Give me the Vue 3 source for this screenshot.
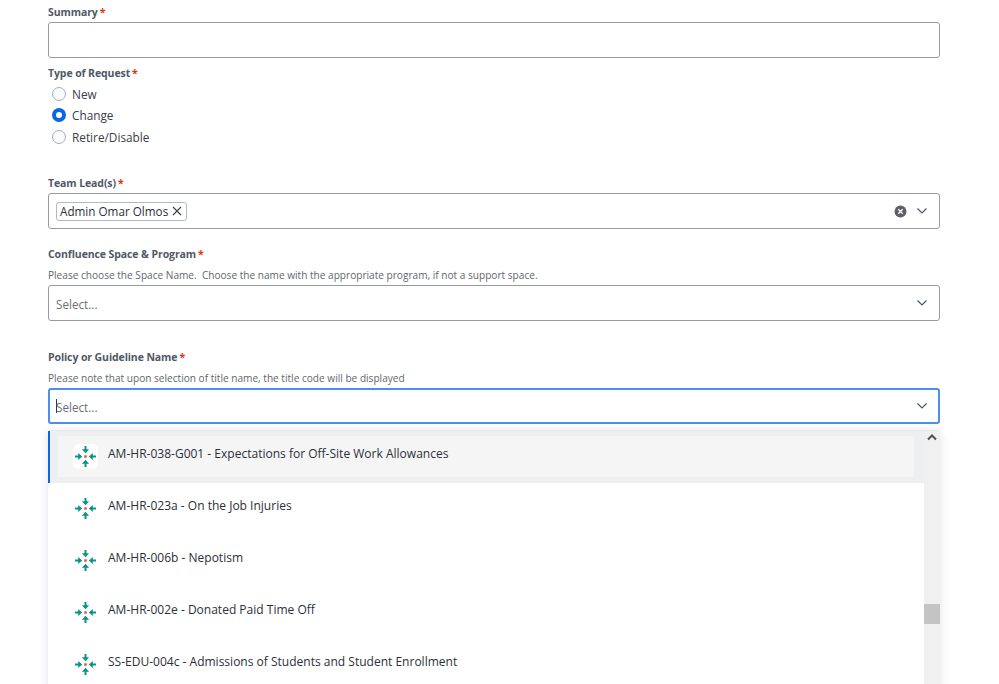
<script setup>
const options = [
  'AM-HR-038-G001 - Expectations for Off-Site Work Allowances',
  'AM-HR-023a - On the Job Injuries',
  'AM-HR-006b - Nepotism',
  'AM-HR-002e - Donated Paid Time Off',
  'SS-EDU-004c - Admissions of Students and Student Enrollment'
]
const radios = [
  { label: 'New', checked: false },
  { label: 'Change', checked: true },
  { label: 'Retire/Disable', checked: false }
]
</script>

<template>
  <div class="page">
    <div class="field summary">
      <label class="label">Summary<span class="req">*</span></label>
      <div class="control"></div>
    </div>

    <div class="field type">
      <label class="label">Type of Request<span class="req">*</span></label>
      <div class="radios">
        <div v-for="r in radios" :key="r.label" class="radio-row">
          <span class="radio" :class="{ checked: r.checked }"></span>
          <span>{{ r.label }}</span>
        </div>
      </div>
    </div>

    <div class="field lead">
      <label class="label">Team Lead(s)<span class="req">*</span></label>
      <div class="control select">
        <span class="tag">Admin Omar Olmos
          <svg width="10" height="10" viewBox="0 0 10 10"><path d="M1 1l8 8M9 1l-8 8" stroke="#3a4048" stroke-width="1.1" fill="none"/></svg>
        </span>
        <svg class="clear" width="13" height="13" viewBox="0 0 12 12"><circle cx="6" cy="6" r="5.5" fill="#5e6066"/><path d="M4 4l4 4M8 4l-4 4" stroke="#fff" stroke-width="1.2"/></svg>
        <svg class="chev" width="10" height="6" viewBox="0 0 10 6"><path d="M.5.5L5 5 9.5.5" stroke="#42526e" stroke-width="1.1" fill="none"/></svg>
      </div>
    </div>

    <div class="field space">
      <label class="label">Confluence Space &amp; Program<span class="req">*</span></label>
      <p class="help">Please choose the Space Name.&nbsp; Choose the name with the appropriate program, if not a support space.</p>
      <div class="control select tall">
        <span class="placeholder">Select...</span>
        <svg class="chev push" width="10" height="6" viewBox="0 0 10 6"><path d="M.5.5L5 5 9.5.5" stroke="#42526e" stroke-width="1.1" fill="none"/></svg>
      </div>
    </div>

    <div class="field policy">
      <label class="label">Policy or Guideline Name<span class="req">*</span></label>
      <p class="help">Please note that upon selection of title name, the title code will be displayed</p>
      <div class="control select tall focused">
        <span class="caret"></span>
        <span class="placeholder">Select...</span>
        <svg class="chev push" width="10" height="6" viewBox="0 0 10 6"><path d="M.5.5L5 5 9.5.5" stroke="#42526e" stroke-width="1.1" fill="none"/></svg>
      </div>

      <div class="menu">
        <div class="list">
          <div v-for="(o, i) in options" :key="o" class="option" :class="{ active: i === 0 }">
            <div class="option-inner">
              <span class="icon">
                <svg width="21" height="21" viewBox="0 0 21 21">
                  <g fill="#0b9486">
                    <path d="M9.5 0h2v3.2h2.6l-3.6 4-3.6-4h2.6z"/>
                    <path d="M9.5 21h2v-3.2h2.6l-3.6-4-3.6 4h2.6z"/>
                    <path d="M0 9.5v2h3.2v2.6l4-3.6-4-3.6v2.6z"/>
                    <path d="M21 9.5v2h-3.2v2.6l-4-3.6 4-3.6v2.6z"/>
                  </g>
                  <rect x="9.3" y="9.3" width="2.4" height="2.4" fill="#e5493a"/>
                </svg>
              </span>
              <span class="option-text">{{ o }}</span>
            </div>
          </div>
        </div>
        <div class="scrollbar">
          <svg class="arrow" width="10" height="7" viewBox="0 0 10 7"><path d="M1 5.5L5 1.5l4 4" stroke="#505050" stroke-width="2" fill="none"/></svg>
          <div class="thumb"></div>
        </div>
      </div>
    </div>
  </div>
</template>

<style scoped>
.page {
  width: 892px;
  margin-left: 48px;
  font-family: "Open Sans", "Noto Sans", sans-serif;
  color: #172b4d;
  padding-top: 6px;
}
.field {
  display: flex;
  flex-direction: column;
}
.label {
  font-size: 10.5px;
  line-height: 13px;
  font-weight: 700;
  color: #505866;
  letter-spacing: -0.1px;
}
.req {
  color: #de350b;
  margin-left: 2px;
}
.help {
  margin: 8px 0 3px;
  font-size: 10.1px;
  line-height: 13px;
  color: #5f6670;
}
.control {
  box-sizing: border-box;
  height: 36px;
  margin-top: 3px;
  border: 1px solid #979aa0;
  border-radius: 3px;
  background: #fff;
}
.type {
  margin-top: 9px;
}
.radios {
  margin-top: 3px;
  padding-left: 4px;
}
.radio-row {
  display: flex;
  align-items: center;
  gap: 6px;
  height: 21.5px;
  font-size: 11.8px;
  color: #3a4048;
}
.radio {
  box-sizing: border-box;
  width: 14px;
  height: 14px;
  border: 1px solid #a8adb6;
  border-radius: 50%;
  background: #fafbfc;
}
.radio.checked {
  border: 4px solid #0c66e4;
  background: #fff;
}
.lead {
  margin-top: 29.5px;
}
.select {
  display: flex;
  align-items: center;
  padding: 0 12px 0 7px;
}
.tall {
  margin-top: 0;
}
.tag {
  display: flex;
  align-items: center;
  gap: 4px;
  height: 19px;
  box-sizing: border-box;
  padding: 0 4px 0 3px;
  border: 1px solid #b3b9c4;
  border-radius: 3px;
  font-size: 11.7px;
  color: #2b3038;
}
.clear {
  margin-left: auto;
}
.chev {
  margin-left: 10px;
}
.push {
  margin-left: auto;
}
.placeholder {
  font-size: 11.7px;
  color: #6b6f76;
  position: relative;
  top: 1px;
}
.space {
  margin-top: 19px;
}
.policy {
  margin-top: 30px;
  position: relative;
}
.focused {
  border: 2px solid #4c8ef0;
  padding-left: 6px;
  padding-right: 11px;
}
.caret {
  width: 1px;
  height: 14px;
  background: #253858;
  margin-right: -1px;
}
.menu {
  position: absolute;
  top: 79px;
  left: 0;
  right: 0;
  display: flex;
  background: #fff;
  border-top: 1px solid #e6e7ea;
  border-radius: 3px 3px 0 0;
  box-shadow: 0 2px 10px rgba(9, 30, 66, 0.13);
}
.list {
  flex: 1;
}
.option {
  box-sizing: border-box;
  height: 52px;
  padding: 5px 10px;
}
.option.active {
  background: #eeeff1;
  box-shadow: inset 2px 0 0 #0c66e4;
}
.option-inner {
  display: flex;
  align-items: center;
  height: 41px;
  padding-left: 15px;
}
.active .option-inner {
  background: #f5f5f6;
}
.icon {
  box-sizing: border-box;
  width: 25px;
  height: 25px;
  flex: none;
  display: flex;
  align-items: center;
  justify-content: center;
  border-radius: 6px;
}
.active .icon {
  background: #fff;
}
.option-text {
  margin-left: 10px;
  font-size: 12.03px;
  color: #2b3038;
  position: relative;
  top: -3px;
}
.scrollbar {
  position: relative;
  width: 16px;
  background: #f0f0f0;
  flex: none;
}
.arrow {
  position: absolute;
  top: 3px;
  left: 3px;
}
.thumb {
  position: absolute;
  top: 173px;
  left: 0;
  right: 0;
  height: 20px;
  background: #c4c4c4;
}
</style>

<style>
html, body {
  height: 684px;
  overflow: hidden;
  background: #fff;
}
</style>
